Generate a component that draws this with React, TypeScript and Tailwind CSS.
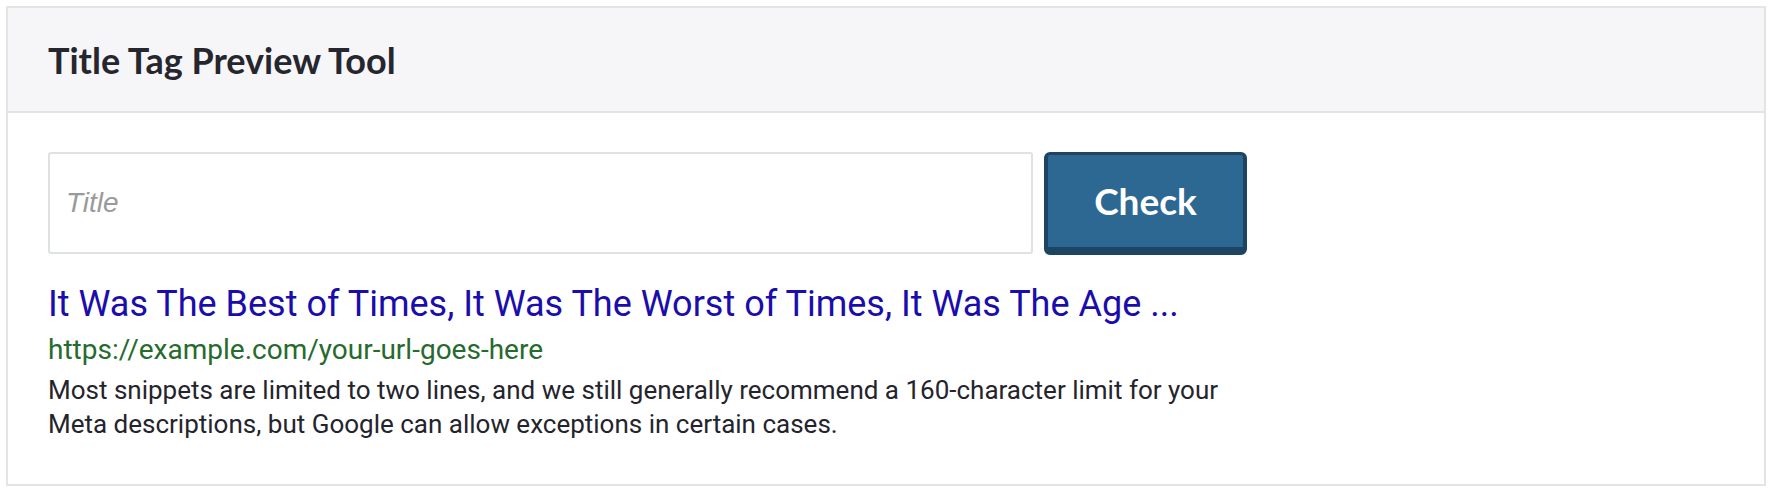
export default function App() {
  return (
    <div className="w-full h-[492px] bg-white p-[6px] pt-[6px]">
      <div className="border-2 border-[#e4e4e4] h-[480px] flex flex-col">
        {/* Header */}
        <div className="h-[105px] bg-[#f6f6f8] border-b-2 border-[#e4e4e4] flex items-center pl-[40px]">
          <h1
            className="text-[36px] font-bold text-[#26262e]"
            style={{ fontFamily: "Lato, 'Noto Sans', sans-serif" }}
          >
            Title Tag Preview Tool
          </h1>
        </div>

        {/* Body */}
        <div className="pl-[40px] pt-[39px]">
          <div className="flex gap-[11px]">
            <input
              type="text"
              placeholder="Title"
              className="w-[985px] h-[102px] border-2 border-[#dfe2e2] rounded-[3px] px-[16px] text-[28px] italic text-[#333] placeholder:text-[#9a9a9a] outline-none"
              style={{ fontFamily: "'Liberation Sans', Arial, sans-serif" }}
            />
            <button
              className="w-[203px] h-[103px] rounded-[6px] bg-[#2d6892] border-[3px] border-x-[4px] border-b-[8px] border-[#1d4462] text-white text-[37px] font-bold"
              style={{ fontFamily: "Lato, 'Noto Sans', sans-serif" }}
            >
              Check
            </button>
          </div>

          <div className="mt-[27px]" style={{ fontFamily: "Roboto, 'Noto Sans', sans-serif" }}>
            <div className="text-[36px] leading-[44px] text-[#1a0dab]">
              It Was The Best of Times, It Was The Worst of Times, It Was The Age ...
            </div>
            <div className="mt-[4px] text-[28px] leading-[40px] text-[#266a2e]">
              https://example.com/your-url-goes-here
            </div>
            <p className="mt-[3px] w-[1230px] text-[26px] leading-[34px] text-[#24242c]">
              Most snippets are limited to two lines, and we still generally recommend a 160-character limit for your
              Meta descriptions, but Google can allow exceptions in certain cases.
            </p>
          </div>
        </div>
      </div>
    </div>
  );
}
